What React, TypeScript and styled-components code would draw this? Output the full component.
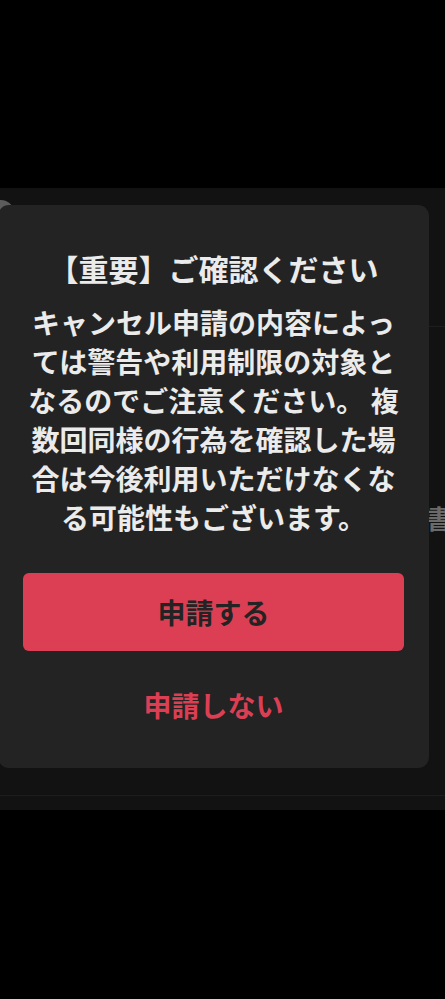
import React from 'react';
import styled, { createGlobalStyle } from 'styled-components';

const GlobalStyle = createGlobalStyle`
  html, body {
    margin: 0;
    padding: 0;
    background: #000000;
  }
  body {
    font-family: "Noto Sans CJK JP", "Noto Sans", sans-serif;
  }
`;

const Screen = styled.div`
  width: 445px;
  height: 999px;
  background: #000000;
  overflow: hidden;
`;

const Backdrop = styled.div`
  position: relative;
  margin-top: 188px;
  height: 622px;
  background: #121212;
  overflow: hidden;
`;

const HeaderRow = styled.div`
  height: 139px;
  border-bottom: 1px solid #1d1d1d;
  box-sizing: border-box;
  padding-top: 12px;
`;

const Avatar = styled.div`
  width: 26px;
  height: 26px;
  margin-left: -12px;
  border-radius: 50%;
  background: #5c5c5c;
`;

const ListRow = styled.div`
  height: 469px;
  border-bottom: 1px solid #1d1d1d;
  box-sizing: border-box;
  padding-top: 174px;
  padding-left: 426px;
  white-space: nowrap;
  color: #6a6a6a;
  font-size: 26px;
  font-weight: 700;
  line-height: 34px;
`;

const Modal = styled.div`
  position: absolute;
  top: 17px;
  left: -2px;
  width: 431px;
  height: 563px;
  box-sizing: border-box;
  padding: 43px 25px 24px;
  background: #232323;
  border-radius: 11px;
  display: flex;
  flex-direction: column;
  align-items: stretch;
`;

const Title = styled.h2`
  margin: 0;
  text-align: center;
  color: #ebebeb;
  font-size: 30px;
  font-weight: 700;
  line-height: 40px;
`;

const Message = styled.p`
  margin: 14.5px 0 0;
  text-align: center;
  color: #ebebeb;
  font-size: 28px;
  font-weight: 700;
  line-height: 39px;
`;

const Button = styled.button<{ $primary?: boolean }>`
  height: 78px;
  margin-top: ${p => (p.$primary ? '36.5px' : '15px')};
  border: none;
  border-radius: 6px;
  background: ${p => (p.$primary ? '#dc3f53' : 'transparent')};
  color: ${p => (p.$primary ? '#232323' : '#dc3f53')};
  font-family: inherit;
  font-size: 28px;
  font-weight: 700;
  cursor: pointer;
`;

export default function App() {
  return (
    <Screen>
      <GlobalStyle />
      <Backdrop>
        <HeaderRow>
          <Avatar />
        </HeaderRow>
        <ListRow>書類</ListRow>
        <Modal>
          <Title>【重要】ご確認ください</Title>
          <Message>
            キャンセル申請の内容によっ<br />
            ては警告や利用制限の対象と<br />
            なるのでご注意ください。 複<br />
            数回同様の行為を確認した場<br />
            合は今後利用いただけなくな<br />
            る可能性もございます。
          </Message>
          <Button $primary>申請する</Button>
          <Button>申請しない</Button>
        </Modal>
      </Backdrop>
    </Screen>
  );
}
